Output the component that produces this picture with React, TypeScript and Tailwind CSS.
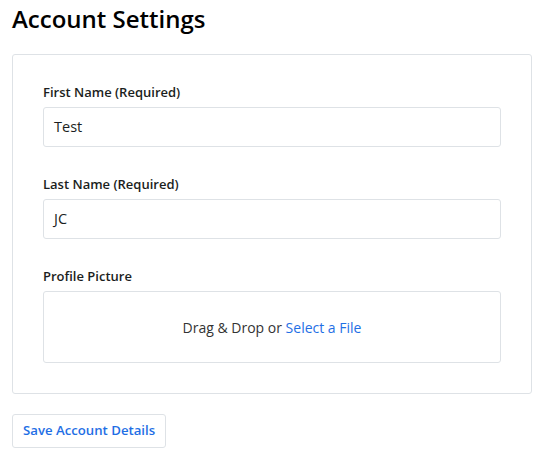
import React from "react";

export default function App() {
  return (
    <div className="w-[548px] h-[460px] bg-white text-[#1b1e21]" style={{ fontFamily: '"Open Sans", "Noto Sans", sans-serif' }}>
      <div className="px-3 pt-[4px]">
        <h1 className="text-[24px] leading-[30px] font-semibold text-black">Account Settings</h1>
        <div className="mt-[20px] w-[520px] border border-[#dee2e6] rounded-[3px] px-[30px] pt-[27px] pb-[30px]">
          <div className="flex flex-col">
            <label className="text-[13px] leading-[20px] font-semibold">First Name (Required)</label>
            <div className="mt-[5px] h-[40px] border border-[#dee2e6] rounded-[3px] px-[10px] flex items-center text-[14.5px]">Test</div>
          </div>
          <div className="flex flex-col mt-[27px]">
            <label className="text-[13px] leading-[20px] font-semibold">Last Name (Required)</label>
            <div className="mt-[5px] h-[40px] border border-[#dee2e6] rounded-[3px] px-[10px] flex items-center text-[14.5px]">JC</div>
          </div>
          <div className="flex flex-col mt-[27px]">
            <label className="text-[13px] leading-[20px] font-semibold">Profile Picture</label>
            <div className="mt-[5px] h-[72px] border border-[#dee2e6] rounded-[3px] flex items-center justify-center text-[14px] font-medium text-[#333]">
              <span>Drag &amp; Drop or <span className="text-[#1f6fe5]">Select a File</span></span>
            </div>
          </div>
        </div>
        <button className="mt-[20px] h-[34px] px-[10px] border border-[#dee2e6] rounded-[3px] text-[13.2px] font-semibold text-[#1f6fe5] bg-white">Save Account Details</button>
      </div>
    </div>
  );
}
